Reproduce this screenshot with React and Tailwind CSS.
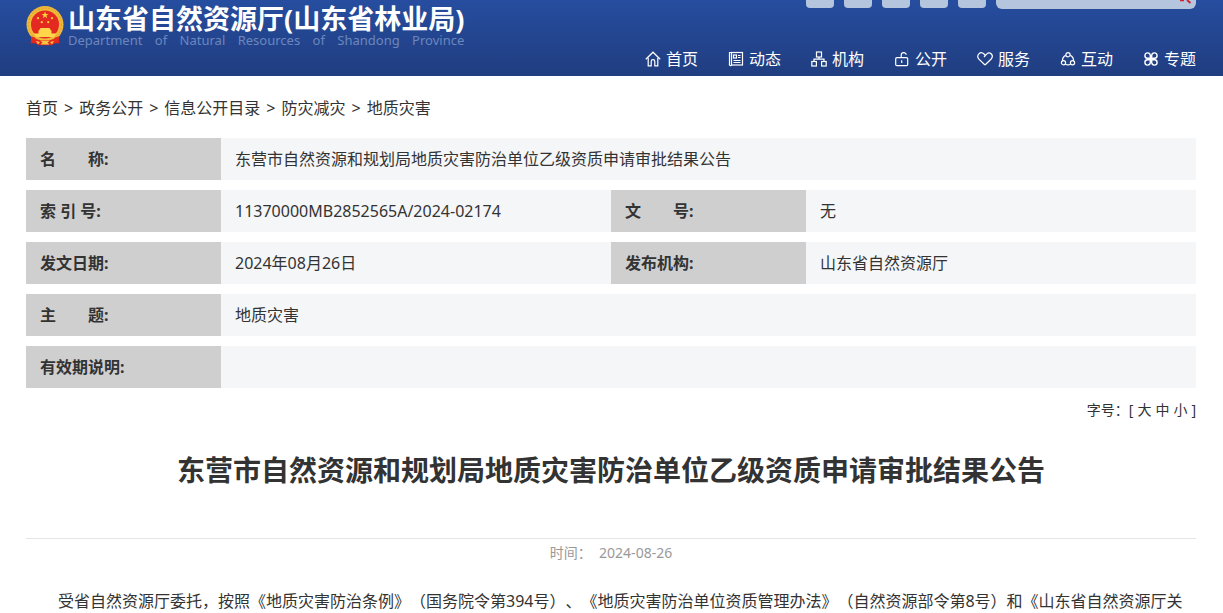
import React from 'react';

const navItems = [
  { label: '首页', icon: 'home' },
  { label: '动态', icon: 'news' },
  { label: '机构', icon: 'org' },
  { label: '公开', icon: 'lock' },
  { label: '服务', icon: 'heart' },
  { label: '互动', icon: 'share' },
  { label: '专题', icon: 'clover' },
];

const tools = ['无障碍', '手机版', '微信', '微博', '邮箱'];

const crumbs = ['首页', '政务公开', '信息公开目录', '防灾减灾', '地质灾害'];

const icons = {
  home: (
    <>
      <path d="M0.8 8.2 8 1.2l7.2 7" />
      <path d="M3.2 6.8v8h3v-4.3a1.8 1.8 0 0 1 3.6 0v4.3h3v-8" />
    </>
  ),
  news: (
    <>
      <rect x="3.5" y="1.5" width="11" height="12.5" />
      <path d="M3.5 1.5h-2V13a1 1 0 0 0 2 1M5.5 11.5h7M5.5 9.5h7M10 4.500h2.500M10 6.500h2.500" />
      <rect x="5.500" y="4" width="3" height="3" />
    </>
  ),
  org: (
    <>
      <rect x="5.5" y="1" width="5" height="5" />
      <rect x="0.8" y="10.5" width="4.6" height="4.5" />
      <rect x="10.6" y="10.5" width="4.6" height="4.5" />
      <path d="M8 6v2.2M3 10.5V8.2h10v2.3" />
    </>
  ),
  lock: (
    <>
      <rect x="1.7" y="6.6" width="12" height="8" rx="1.2" />
      <path d="M7.2 6.6V4.2c0-3.3 5-3.3 5-0.4M7.7 9.3v2.8" />
    </>
  ),
  heart: (
    <path d="M8 14 1.9 8.1C-1.2 4.6 3.2-0.5 7 3l1.600 1.600M7 6l2.600-2.900c3.500-3.200 7.600 1.300 4.600 4.900L8 14" />
  ),
  share: (
    <>
      <circle cx="8" cy="3.7" r="2.1" />
      <circle cx="3.5" cy="11.7" r="2.1" />
      <circle cx="12.5" cy="11.7" r="2.1" />
      <path d="M5.7 4.4C3.5 5.5 2.4 7.5 2.5 9.7M10.3 4.4c2.2 1.1 3.3 3.1 3.2 5.3M5.4 13.2c1.6 0.9 3.6 0.9 5.2 0" />
    </>
  ),
  clover: (
    <path
      d="M7.300 7.300H4.300A2.700 2.700 0 1 1 7.300 4.300zM8.700 7.300V4.300A2.700 2.700 0 1 1 11.700 7.300zM7.300 8.700v3A2.700 2.700 0 1 1 4.300 8.700zM8.700 8.700h3A2.700 2.700 0 1 1 8.700 11.700z"
      strokeWidth="1.400"
    />
  ),
};

const NavIcon = ({ name }) => (
  <svg
    viewBox="0 0 16 16"
    className="size-4 shrink-0"
    fill="none"
    stroke="currentColor"
    strokeWidth="1.2"
    aria-hidden="true"
  >
    {icons[name]}
  </svg>
);

const Emblem = () => (
  <svg viewBox="0 0 38 40" className="h-10 w-[38px] shrink-0" aria-hidden="true">
    <path d="M6 29 4.5 37.5l5-0.6 2.5 2.3h14l2.5-2.3 5 0.6L32 29z" fill="#d7201b" />
    <circle cx="19" cy="18.5" r="18.5" fill="#f0b93a" />
    <circle cx="19" cy="18.5" r="16.5" fill="none" stroke="#d9962a" strokeWidth="0.8" strokeDasharray="2 1.5" />
    <circle cx="19" cy="18.5" r="14" fill="#e42a20" />
    <path d="m19 5.5 0.9 2.5h2.6l-2.1 1.6 0.8 2.6-2.2-1.6-2.2 1.6 0.8-2.6L15.5 8h2.6z" fill="#ffcf3f" />
    <g fill="#ffcf3f">
      <circle cx="12" cy="12.2" r="1.1" />
      <circle cx="15.8" cy="16.2" r="1.1" />
      <circle cx="22.2" cy="16.2" r="1.1" />
      <circle cx="26" cy="12.2" r="1.1" />
    </g>
    <path d="M14.5 22h9l1.5 2.5h-12zM12.5 24.5h13v3h-13zM7.5 27.5h23l-2.5 3.500H10z" fill="#ffd54a" />
    <path d="M5 30.5c4 0 5 3.5 9 3.5h10c4 0 5-3.5 9-3.500v6c-4 0-5 2-9 2H14c-4 0-5-2-9-2z" fill="#e42a20" />
    <path d="m10 35 4 1-2 2.5zM28 35l-4 1 2 2.5zM14 34.500h10l-2.500 2 2 2h-9l2-2z" fill="#f5c544" />
  </svg>
);

const Header = () => (
  <header className="bg-gradient-to-b from-[#264d9f] to-[#203d80] text-white">
    <div className="flex h-[76px] justify-between pr-[27px] pl-[26px]">
      <a href="#" className="flex items-start gap-1 pt-1.5">
        <Emblem />
        <div>
          <div className="text-[27px] leading-[26px] font-bold whitespace-nowrap">山东省自然资源厅(山东省林业局)</div>
          <div className="flex justify-between text-[13px] leading-4 text-[#6c87bd]">
            {['Department', 'of', 'Natural', 'Resources', 'of', 'Shandong', 'Province'].map((word, i) => (
              <span key={i}>{word}</span>
            ))}
          </div>
        </div>
      </a>

      <div className="flex flex-col items-end justify-between pb-[5px]">
        <div className="flex gap-2.5">
          {tools.map((tool) => (
            <button key={tool} type="button" aria-label={tool} className="h-2 w-7 rounded-b-sm bg-[#b4c5dd]" />
          ))}
          <form className="relative h-[9px] w-[200px] overflow-hidden rounded-b-md bg-[#b4c5dd]">
            <input type="text" aria-label="搜索" className="block h-full w-full px-2 outline-none" />
            <svg viewBox="0 0 16 4" className="absolute top-0 right-1 h-1 w-4" aria-hidden="true">
              <path d="M4 0.3h4M11 0l3.500 3" fill="none" stroke="#d3202c" strokeWidth="1.8" />
            </svg>
          </form>
        </div>
        <nav className="flex gap-[30px]">
          {navItems.map((item) => (
            <a key={item.label} href="#" className="flex items-center gap-[5px] leading-6 whitespace-nowrap">
              <NavIcon name={item.icon} />
              {item.label}
            </a>
          ))}
        </nav>
      </div>
    </div>
  </header>
);

const Label = ({ children }) => (
  <th scope="row" className="h-[42px] w-1/6 bg-[#cfcfcf] px-3.5 text-left font-bold whitespace-pre">
    {children}
  </th>
);

const Value = ({ children, colSpan }) => (
  <td colSpan={colSpan} className="h-[42px] bg-[#f5f6f8] px-3.5">
    {children}
  </td>
);

const InfoTable = () => (
  <table className="w-full table-fixed border-separate border-spacing-x-0 border-spacing-y-2.5">
    <tbody>
      <tr>
        <Label>{'名\u3000\u3000称:'}</Label>
        <Value colSpan={5}>东营市自然资源和规划局地质灾害防治单位乙级资质申请审批结果公告</Value>
      </tr>
      <tr>
        <Label>索 引 号:</Label>
        <Value colSpan={2}>11370000MB2852565A/2024-02174</Value>
        <Label>{'文\u3000\u3000号:'}</Label>
        <Value colSpan={2}>无</Value>
      </tr>
      <tr>
        <Label>发文日期:</Label>
        <Value colSpan={2}>2024年08月26日</Value>
        <Label>发布机构:</Label>
        <Value colSpan={2}>山东省自然资源厅</Value>
      </tr>
      <tr>
        <Label>{'主\u3000\u3000题:'}</Label>
        <Value colSpan={5}>地质灾害</Value>
      </tr>
      <tr>
        <Label>有效期说明:</Label>
        <Value colSpan={5} />
      </tr>
    </tbody>
  </table>
);

const App = () => {
  return (
    <div className="bg-white font-['Noto_Sans','Noto_Sans_CJK_SC',sans-serif] text-base text-[#333] [text-spacing-trim:space-all]" lang="zh-CN">
      <Header />
      <main className="pr-[27px] pl-[26px]">
        <div className="flex gap-1.5 pt-5 pb-2 leading-6">
          {crumbs.map((crumb, i) => (
            <React.Fragment key={crumb}>
              {i > 0 && <span>&gt;</span>}
              <a href="#">{crumb}</a>
            </React.Fragment>
          ))}
        </div>

        <InfoTable />

        <div className="mt-0.5 flex justify-end gap-1 text-sm">
          <span>字号：[</span>
          <button type="button">大</button>
          <button type="button">中</button>
          <button type="button">小</button>
          <span>]</span>
        </div>

        <h1 className="py-8 text-center text-[28px] leading-9 font-bold">
          东营市自然资源和规划局地质灾害防治单位乙级资质申请审批结果公告
        </h1>

        <div className="mt-[18px] border-t border-[#e5e5e5] pt-1 text-center text-sm text-[#999]">
          时间：&nbsp; 2024-08-26
        </div>

        <p className="mt-[22px] indent-8 leading-8">
          受省自然资源厅委托，按照《地质灾害防治条例》（国务院令第394号）、《地质灾害防治单位资质管理办法》（自然资源部令第8号）和《山东省自然资源厅关
        </p>
      </main>
    </div>
  );
};

export default App;
